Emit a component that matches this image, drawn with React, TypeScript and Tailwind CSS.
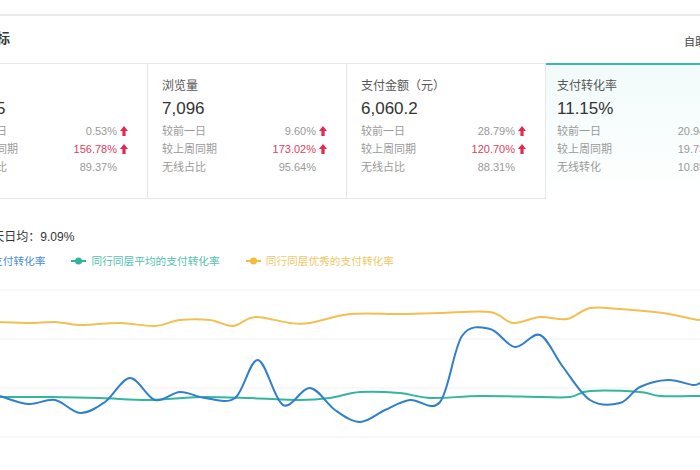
import React from 'react';

type Pt = [number, number];

// catmull-rom -> cubic bezier, gives the soft curves of the chart
function smooth(pts: Pt[]) {
  let d = `M${pts[0][0]},${pts[0][1]}`;
  for (let i = 0; i < pts.length - 1; i++) {
    const p0 = pts[i - 1] || pts[i];
    const p1 = pts[i];
    const p2 = pts[i + 1];
    const p3 = pts[i + 2] || p2;
    const c1x = p1[0] + (p2[0] - p0[0]) / 6;
    const c1y = p1[1] + (p2[1] - p0[1]) / 6;
    const c2x = p2[0] - (p3[0] - p1[0]) / 6;
    const c2y = p2[1] - (p3[1] - p1[1]) / 6;
    d += ` C${c1x.toFixed(1)},${c1y.toFixed(1)} ${c2x.toFixed(1)},${c2y.toFixed(1)} ${p2[0]},${p2[1]}`;
  }
  return d;
}

const blue: Pt[] = [[0,396],[28,404],[55,400],[80,413],[105,402],[130,378],[155,400],[180,392],[205,398],[235,398],[258,360],[283,405],[310,388],[335,410],[360,422],[385,410],[410,400],[440,402],[462,336],[490,329],[515,347],[540,335],[563,367],[590,400],[620,403],[640,387],[668,380],[693,385],[700,383]];
const teal: Pt[] = [[0,397],[50,397],[100,398],[150,400],[200,397],[250,398],[300,400],[330,398],[360,392],[400,393],[430,398],[480,396],[540,397],[570,397],[590,391],[640,392],[660,396],[700,396]];
const yellow: Pt[] = [[0,322],[30,323],[55,322],[80,325],[120,323],[155,326],[180,320],[210,320],[233,326],[255,317],[290,323],[310,323],[350,314],[400,314],[440,313],[490,312],[513,323],[540,317],[567,319],[590,308],[620,309],[663,313],[693,319],[700,320]];

const cards = [
  { label: '访客数', value: '2,635', rows: [['较前一日', '0.53%', 'up'], ['较上周同期', '156.78%', 'red'], ['无线占比', '89.37%', '']] },
  { label: '浏览量', value: '7,096', rows: [['较前一日', '9.60%', 'up'], ['较上周同期', '173.02%', 'red'], ['无线占比', '95.64%', '']] },
  { label: '支付金额（元）', value: '6,060.2', rows: [['较前一日', '28.79%', 'up'], ['较上周同期', '120.70%', 'red'], ['无线占比', '88.31%', '']] },
  { label: '支付转化率', value: '11.15%', rows: [['较前一日', '20.94%', 'up'], ['较上周同期', '19.73%', 'up'], ['无线转化', '10.85%', '']] },
];

const UpArrow = () => (
  <svg width="8" height="10" viewBox="0 0 8 10" className="shrink-0">
    <path d="M4 0 L8 5 H5.6 V10 H2.4 V5 H0 Z" fill="#e3294f" />
  </svg>
);

const LegendMark = ({ color }: { color: string }) => (
  <svg width="15" height="8" viewBox="0 0 15 8" className="shrink-0">
    <line x1="0" y1="4" x2="15" y2="4" stroke={color} strokeWidth="2" />
    <circle cx="7.5" cy="4" r="3.5" fill={color} />
  </svg>
);

export default function App() {
  return (
    <div className="w-[700px] h-[470px] overflow-hidden bg-white text-[#333] font-['Liberation_Sans','Noto_Sans_CJK_SC',sans-serif]">
      <div className="h-[14px]" />
      <div className="h-[2px] bg-[#ebebeb]" />
      <div className="h-[47px] flex items-center">
        <h2 className="-ml-[46px] pb-[3px] text-[14px] font-semibold text-[#333] whitespace-nowrap">核心指标</h2>
        <span className="ml-auto -mr-[28px] mt-[6px] text-[11px] text-[#444] whitespace-nowrap">自助取数</span>
      </div>

      <div className="flex -ml-[51px] h-[136px]">
        {cards.map((c, i) => {
          const active = i === 3;
          return (
            <div
              key={c.label}
              className={
                active
                  ? 'w-[199px] shrink-0 border-t-2 border-[#3cb9ad] bg-gradient-to-b from-[#f1fbfa] to-white pl-[11px] pr-[19px] pt-[12px]'
                  : 'w-[199px] shrink-0 border-t border-b border-r border-[#e6e6e6] pl-[14px] pr-[19px] pt-[13px]'
              }
            >
              <div className="text-[12px] leading-[18px] text-[#555] whitespace-nowrap">{c.label}</div>
              <div className="mt-[3px] text-[17px] leading-[22px] text-[#333]">{c.value}</div>
              <div className="mt-[2px]">
                {c.rows.map(([k, v, t]) => (
                  <div key={k} className="flex items-center h-[18px] text-[11px]">
                    <span className="flex-1 text-[#9a9a9a] whitespace-nowrap">{k}</span>
                    <span className={t === 'red' ? 'text-[#e0405e]' : 'text-[#999]'}>{v}</span>
                    <span className="w-[8px] ml-[3px] flex items-center">{t ? <UpArrow /> : null}</span>
                  </div>
                ))}
              </div>
            </div>
          );
        })}
      </div>

      <div className="mt-[29px] -ml-[33px] text-[12px] leading-[18px] text-[#333] whitespace-nowrap">近30天日均：9.09%</div>
      <div className="mt-[6px] -ml-[28px] flex items-center gap-[26px] h-[18px] text-[10.7px] whitespace-nowrap">
        <div className="flex items-center gap-[5px] text-[#4a8fd6]">
          <LegendMark color="#2f80cf" />
          <span>支付转化率</span>
        </div>
        <div className="flex items-center gap-[5px] text-[#52c2b0]">
          <LegendMark color="#30b59c" />
          <span>同行同层平均的支付转化率</span>
        </div>
        <div className="flex items-center gap-[5px] text-[#f2c766]">
          <LegendMark color="#f2bd3e" />
          <span>同行同层优秀的支付转化率</span>
        </div>
      </div>

      <svg width="700" height="200" viewBox="0 270 700 200" className="block">
        {[290, 339, 388, 437].map((y) => (
          <line key={y} x1="0" x2="700" y1={y} y2={y} stroke="#f1f1f1" strokeWidth="1" />
        ))}
        <path d={smooth(yellow)} fill="none" stroke="#f2c050" strokeWidth="2" />
        <path d={smooth(teal)} fill="none" stroke="#33b69d" strokeWidth="2" />
        <path d={smooth(blue)} fill="none" stroke="#2f7fcc" strokeWidth="2" />
      </svg>
    </div>
  );
}
